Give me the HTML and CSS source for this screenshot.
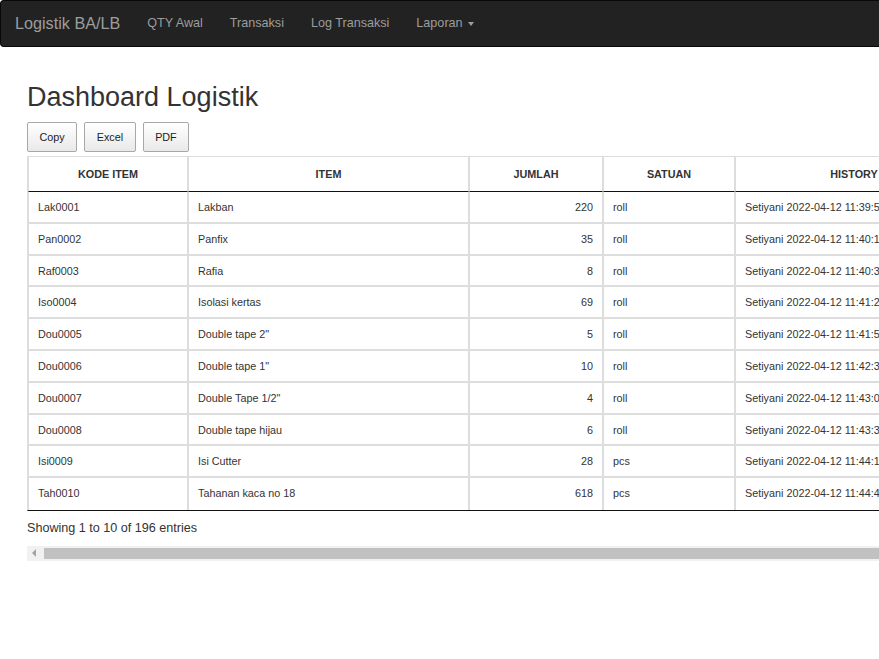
FILE: index.html
```html
<!DOCTYPE html>
<html lang="id">
<head>
<meta charset="utf-8">
<title>Dashboard Logistik</title>
<link rel="stylesheet" href="styles.css">
</head>
<body>
<nav class="navbar">
  <a class="brand" href="#">Logistik BA/LB</a>
  <ul class="nav">
    <li><a href="#">QTY Awal</a></li>
    <li><a href="#">Transaksi</a></li>
    <li><a href="#">Log Transaksi</a></li>
    <li><a href="#">Laporan <span class="caret"></span></a></li>
  </ul>
</nav>
<main class="main">
  <h1 class="title">Dashboard Logistik</h1>
  <div class="buttons">
    <button class="btn">Copy</button>
    <button class="btn">Excel</button>
    <button class="btn">PDF</button>
  </div>
  <div class="scroll-area">
    <table class="data">
      <colgroup>
        <col class="c1"><col class="c2"><col class="c3"><col class="c4"><col class="c5">
      </colgroup>
      <thead>
        <tr><th>KODE ITEM</th><th>ITEM</th><th>JUMLAH</th><th>SATUAN</th><th>HISTORY</th></tr>
      </thead>
      <tbody>
        <tr><td>Lak0001</td><td>Lakban</td><td class="num">220</td><td>roll</td><td>Setiyani 2022-04-12 11:39:52</td></tr>
        <tr><td>Pan0002</td><td>Panfix</td><td class="num">35</td><td>roll</td><td>Setiyani 2022-04-12 11:40:15</td></tr>
        <tr><td>Raf0003</td><td>Rafia</td><td class="num">8</td><td>roll</td><td>Setiyani 2022-04-12 11:40:33</td></tr>
        <tr><td>Iso0004</td><td>Isolasi kertas</td><td class="num">69</td><td>roll</td><td>Setiyani 2022-04-12 11:41:24</td></tr>
        <tr><td>Dou0005</td><td>Double tape 2"</td><td class="num">5</td><td>roll</td><td>Setiyani 2022-04-12 11:41:58</td></tr>
        <tr><td>Dou0006</td><td>Double tape 1"</td><td class="num">10</td><td>roll</td><td>Setiyani 2022-04-12 11:42:37</td></tr>
        <tr><td>Dou0007</td><td>Double Tape 1/2"</td><td class="num">4</td><td>roll</td><td>Setiyani 2022-04-12 11:43:05</td></tr>
        <tr><td>Dou0008</td><td>Double tape hijau</td><td class="num">6</td><td>roll</td><td>Setiyani 2022-04-12 11:43:36</td></tr>
        <tr><td>Isi0009</td><td>Isi Cutter</td><td class="num">28</td><td>pcs</td><td>Setiyani 2022-04-12 11:44:12</td></tr>
        <tr><td>Tah0010</td><td>Tahanan kaca no 18</td><td class="num">618</td><td>pcs</td><td>Setiyani 2022-04-12 11:44:47</td></tr>
      </tbody>
    </table>
    <div class="info">Showing 1 to 10 of 196 entries</div>
  </div>
  <div class="hscroll">
    <span class="arrow"></span>
    <span class="thumb"></span>
  </div>
</main>
</body>
</html>
```
FILE: styles.css
```css
html, body {
  margin: 0;
  padding: 0;
  background: #fff;
  overflow: hidden;
}
body {
  font-family: "Liberation Sans", Arial, sans-serif;
  font-size: 12.6px;
  color: #333;
}
.navbar {
  display: flex;
  align-items: center;
  height: 47px;
  box-sizing: border-box;
  background: #222;
  border: 1px solid #080808;
  border-right: none;
  border-radius: 4px 0 0 4px;
}
.brand {
  color: #9d9d9d;
  font-size: 16.2px;
  text-decoration: none;
  padding: 0 13.5px 0 14px;
  line-height: 45px;
}
.nav {
  display: flex;
  list-style: none;
  margin: 0;
  padding: 0;
}
.nav a {
  display: block;
  color: #9d9d9d;
  text-decoration: none;
  font-size: 12.6px;
  padding: 0 13.5px;
  line-height: 45px;
}
.caret {
  display: inline-block;
  width: 0;
  height: 0;
  margin-left: 2px;
  vertical-align: middle;
  border-top: 4px solid #9d9d9d;
  border-left: 3.5px solid transparent;
  border-right: 3.5px solid transparent;
}
.main {
  padding: 35px 0 0 27px;
}
.title {
  margin: 0 0 10px;
  font-size: 27px;
  font-weight: 500;
  line-height: 30px;
  color: #333;
}
.buttons {
  display: flex;
  gap: 7px;
  margin-bottom: 4px;
}
.btn {
  height: 30px;
  padding: 0 11.5px;
  font-family: "Liberation Sans", Arial, sans-serif;
  font-size: 10.8px;
  color: #222;
  border: 1px solid #a8a8a8;
  border-radius: 2px;
  background: linear-gradient(to bottom, #ffffff 0%, #e9e9e9 100%);
}
.scroll-area {
  overflow: hidden;
}
.data {
  table-layout: fixed;
  width: 946px;
  border-collapse: separate;
  border-spacing: 0;
  border-left: 1px solid #ddd;
  border-bottom: 1px solid #111;
  font-size: 10.8px;
  color: #333;
}
.c1 { width: 160px; }
.c2 { width: 281px; }
.c3 { width: 134px; }
.c4 { width: 132px; }
.c5 { width: 238px; }
.data th,
.data td {
  box-sizing: border-box;
  border-left: 1px solid #ddd;
  border-right: 1px solid #ddd;
  white-space: nowrap;
  overflow: hidden;
}
.data th {
  border-top: 1px solid #ddd;
  border-bottom: 1px solid #111;
  padding: 10px 9px;
  line-height: 14px;
  font-weight: bold;
  text-align: center;
}
.data td {
  border-top: 1px solid #ddd;
  border-bottom: 1px solid #ddd;
  padding: 9px 9px 7px;
  line-height: 13.8px;
  text-align: left;
}
.data tbody tr:first-child td {
  border-top: none;
}
.data tbody tr:last-child td {
  border-bottom: none;
  padding-bottom: 9px;
}
.data td.num {
  text-align: right;
}
.info {
  padding-top: 8.5px;
  line-height: 18px;
  font-size: 12.6px;
}
.hscroll {
  display: flex;
  align-items: center;
  height: 15px;
  margin-top: 8.5px;
  background: #f1f1f1;
}
.arrow {
  width: 0;
  height: 0;
  margin: 0 0 0 5px;
  border-right: 4px solid #a3a3a3;
  border-top: 4px solid transparent;
  border-bottom: 4px solid transparent;
}
.thumb {
  flex: 1;
  height: 11px;
  margin-left: 8px;
  background: #c1c1c1;
}
```
